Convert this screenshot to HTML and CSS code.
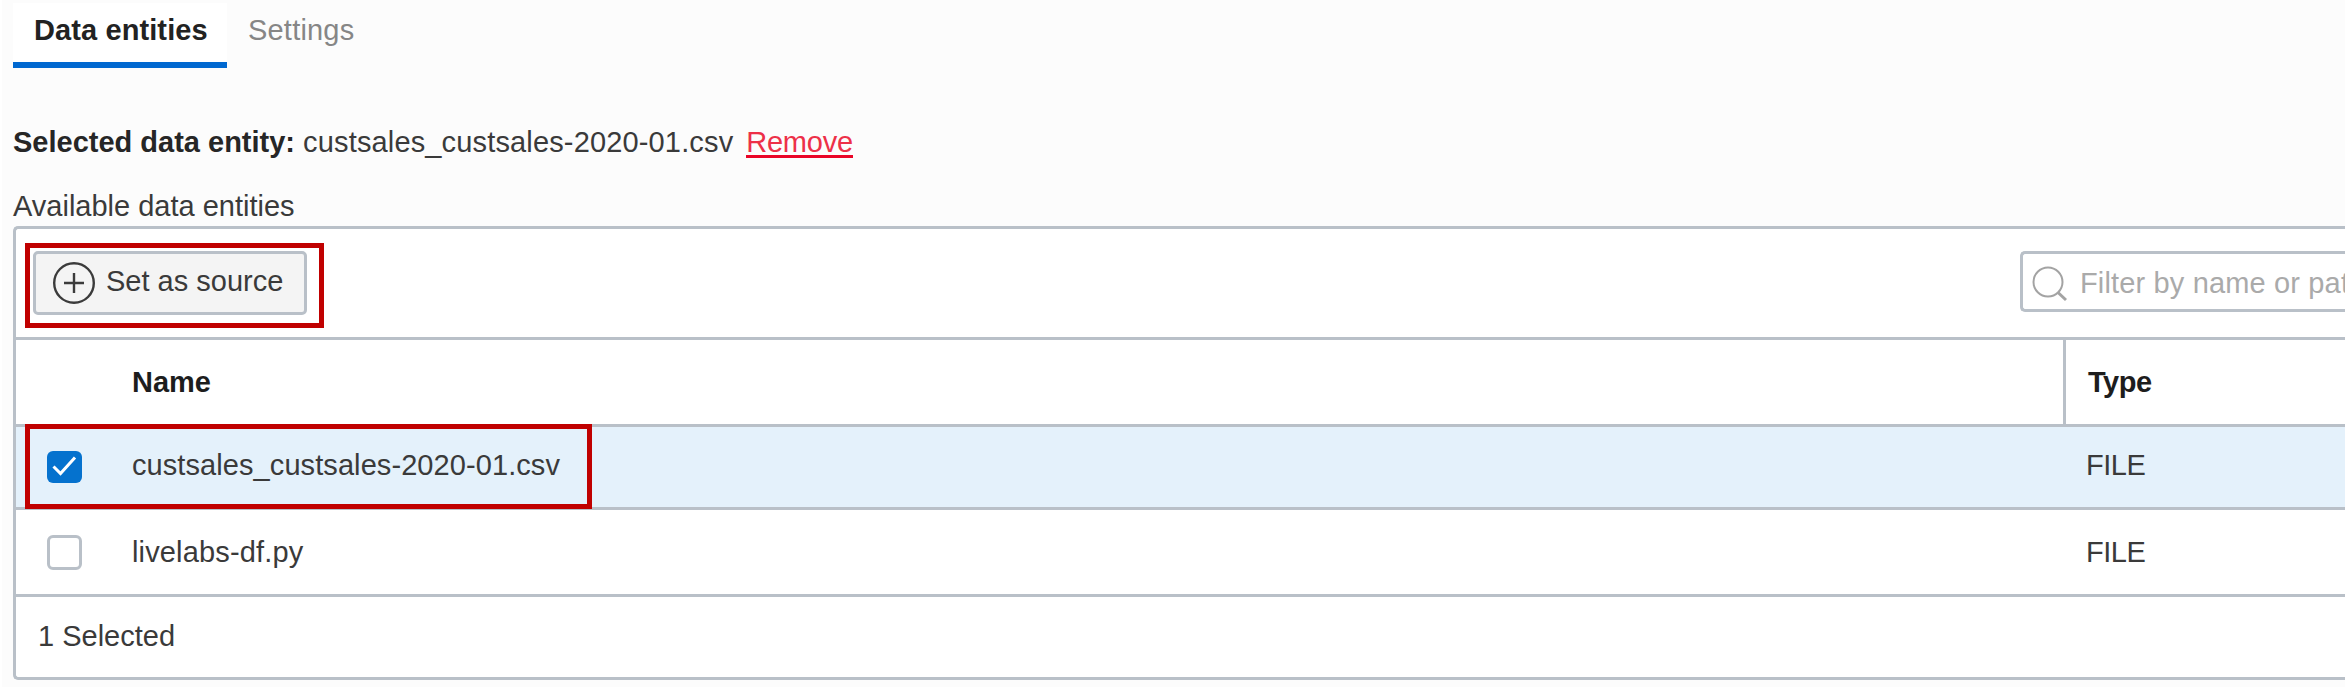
FILE: index.html
```html
<!DOCTYPE html>
<html lang="en">
<head>
<meta charset="utf-8">
<title>Data entities</title>
<link rel="stylesheet" href="styles.css">
</head>
<body>
<main class="page">
  <nav class="tabs">
    <a class="tab tab-active">Data entities</a>
    <a class="tab tab-idle">Settings</a>
  </nav>
  <p class="selected-entity"><strong>Selected data entity:</strong> <span class="filename">custsales_custsales-2020-01.csv</span><a class="remove">Remove</a></p>
  <p class="caption">Available data entities</p>
  <section class="panel">
    <div class="toolbar">
      <button class="button">
        <svg class="plus-icon" width="44" height="44" viewBox="0 0 44 44" fill="none" stroke="#3b3b3b" stroke-width="2.4"><circle cx="22" cy="22" r="19.8"/><path d="M22 12v20M12 22h20"/></svg>
        <span>Set as source</span>
      </button>
      <div class="search">
        <svg class="search-icon" width="38" height="38" viewBox="0 0 38 38" fill="none" stroke="#a3a3a3"><circle cx="17" cy="17" r="14.5" stroke-width="2"/><path d="M27 27.5L35 35" stroke-width="3"/></svg>
        <span>Filter by name or path</span>
      </div>
      <div class="highlight highlight-button"></div>
    </div>
    <div class="row row-head">
      <div class="cell-check"></div>
      <div class="cell-name">Name</div>
      <div class="cell-type">Type</div>
    </div>
    <div class="row row-selected">
      <div class="cell-check"><span class="checkbox checked"><svg width="34" height="32" viewBox="0 0 34 32" fill="none" stroke="#fff" stroke-width="3"><path d="M6.5 15.5L13.5 22.5L28 6.5"/></svg></span></div>
      <div class="cell-name filename">custsales_custsales-2020-01.csv</div>
      <div class="cell-type">FILE</div>
      <div class="highlight highlight-row"></div>
    </div>
    <div class="row row-plain">
      <div class="cell-check"><span class="checkbox"></span></div>
      <div class="cell-name">livelabs-df.py</div>
      <div class="cell-type">FILE</div>
    </div>
    <div class="footer">1 Selected</div>
  </section>
</main>
</body>
</html>
```
FILE: styles.css
```css
* { box-sizing: border-box; }
body {
  margin: 0;
  background: #fff;
  color: #3a3a3a;
  font: 29px/34px "Liberation Sans", Arial, sans-serif;
}
p { margin: 0; }
.page {
  width: 2343px;
  height: 687px;
  margin-left: 2px;
  padding: 3px 0 0 11px;
  background: #fcfcfc;
  overflow: hidden;
  white-space: nowrap;
}
.tabs { display: flex; height: 65px; }
.tab { padding: 10px 21px 0; color: #868686; }
.tab-active {
  width: 214px;
  background: #fff;
  border-bottom: 6px solid #0068d0;
  color: #222;
  font-weight: bold;
  letter-spacing: 0.1px;
}
.tab-idle { letter-spacing: 0.2px; }
.selected-entity { margin-top: 57px; }
.selected-entity strong { color: #262626; }
.filename { letter-spacing: 0.15px; }
.remove {
  display: inline-block;
  height: 33px;
  margin-left: 13px;
  border-bottom: 3px solid #ea0527;
  color: #ed3048;
  letter-spacing: -0.25px;
}
.caption { height: 37px; margin-top: 30px; }
.panel {
  height: 454px;
  border: 3px solid #b9c0c8;
  border-right: 0;
  border-radius: 5px 0 0 5px;
  background: #fff;
}
.toolbar {
  position: relative;
  display: flex;
  justify-content: space-between;
  height: 111px;
  padding: 22px 0 0 17px;
  border-bottom: 3px solid #b9c0c8;
}
.button {
  display: flex;
  align-items: flex-start;
  width: 274px;
  height: 64px;
  padding: 7px 0 0 16px;
  border: 3px solid #b9c0c8;
  border-radius: 5px;
  background: #f4f4f4;
  color: inherit;
  font: inherit;
}
.button span { margin: 3px 0 0 10px; }
.search {
  display: flex;
  width: 325px;
  height: 61px;
  padding: 11px 0 0 8px;
  border: 3px solid #b9c0c8;
  border-right: 0;
  border-radius: 5px 0 0 5px;
  color: #aaa;
  overflow: hidden;
}
.search-icon { flex: none; }
.search span { margin: 1px 0 0 11px; letter-spacing: 0.15px; }
.row {
  position: relative;
  display: grid;
  grid-template-columns: 116px 1931px 1fr;
  border-bottom: 3px solid #b9c0c8;
}
.row-head { height: 87px; color: #1d1d1d; font-weight: bold; }
.row-head > * { padding-top: 25px; }
.row-head .cell-type { border-left: 3px solid #b9c0c8; }
.row-selected { height: 83px; background: #e4f1fb; }
.row-selected > .cell-name, .row-selected > .cell-type { padding-top: 21px; }
.row-selected > .cell-name { letter-spacing: 0.08px; }
.row-plain { height: 87px; }
.row-plain > .cell-name, .row-plain > .cell-type { padding-top: 25px; }
.row-plain > .cell-name { letter-spacing: 0.15px; }
.row .cell-type { padding-left: 23px; letter-spacing: -0.5px; }
.row-head .cell-type { padding-left: 22px; }
.cell-check { padding-left: 31px; }
.row-selected .cell-check { padding-top: 24px; }
.row-plain .cell-check { padding-top: 25px; }
.checkbox {
  display: block;
  width: 35px;
  height: 35px;
  border: 3px solid #b9c0c8;
  border-radius: 6px;
  background: #fff;
}
.checkbox.checked { height: 32px; border: 0; background: #0572ce; }
.checkbox svg { display: block; }
.footer { padding: 22px 0 0 22px; }
.highlight { position: absolute; border: 5px solid #c00000; }
.highlight-button { left: 9px; top: 14px; width: 299px; height: 85px; }
.highlight-row { left: 9px; top: -3px; width: 567px; height: 85px; }
```
